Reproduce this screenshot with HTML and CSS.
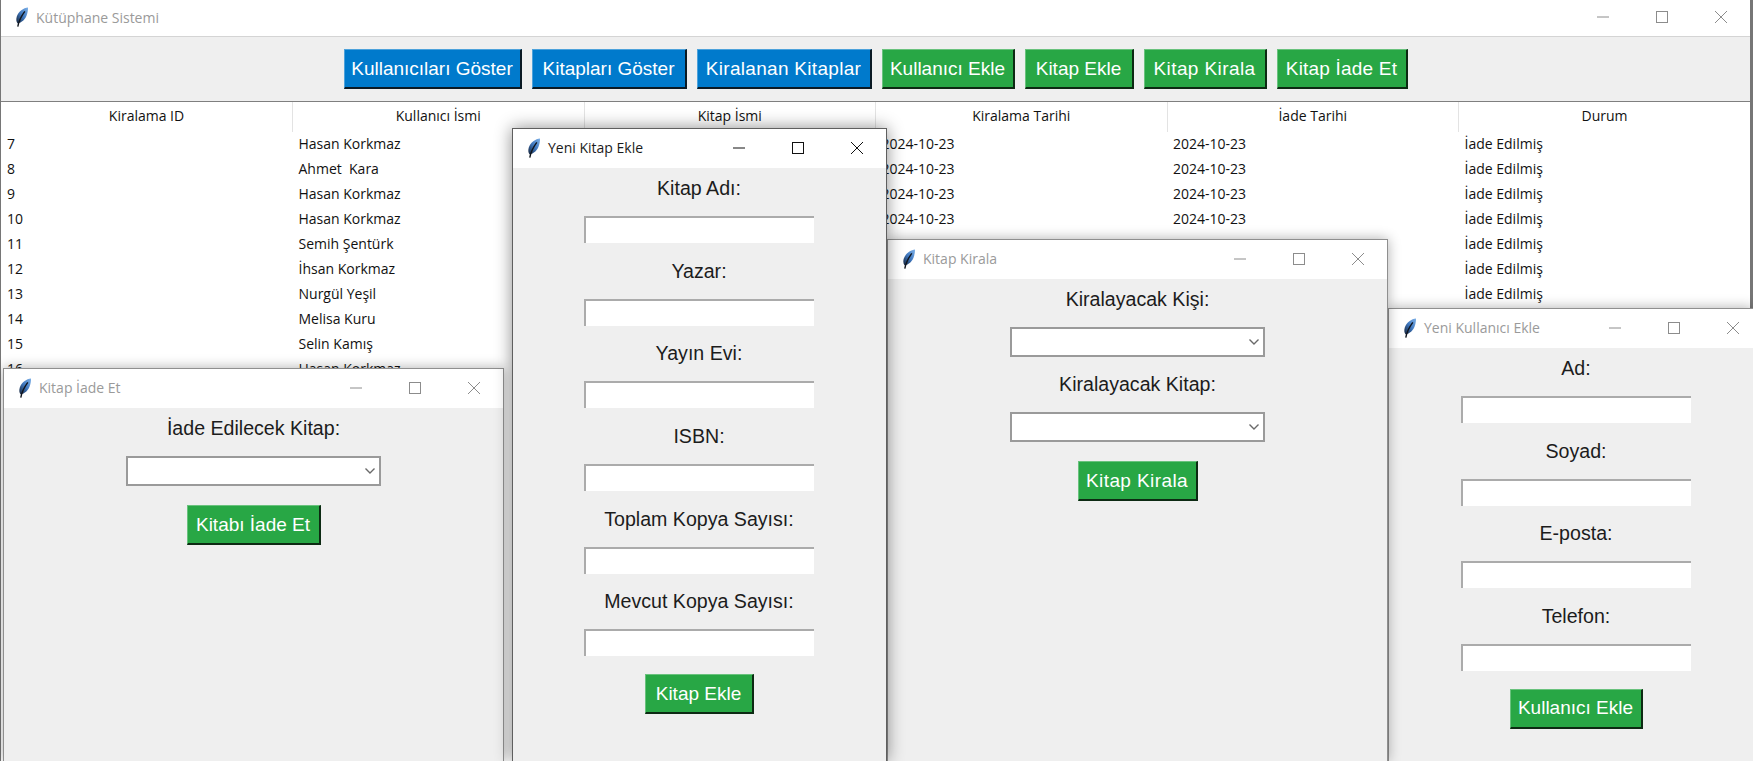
FILE: index.html
```html
<!DOCTYPE html>
<html lang="en">
<head>
    <meta charset="UTF-8">
    <meta name="viewport" content="width=device-width, initial-scale=1.0">
    <title>Kütüphane Sistemi</title>
    <link rel="stylesheet" href="styles.css">
</head>
<body>
    <svg class="sprite" width="0" height="0" xmlns="http://www.w3.org/2000/svg">
        <defs>
            <linearGradient id="featherFill" x1="100%" y1="0%" x2="0%" y2="100%">
                <stop offset="0%" stop-color="#7fb2e8"/>
                <stop offset="50%" stop-color="#3f78c0"/>
                <stop offset="100%" stop-color="#16243a"/>
            </linearGradient>
            <symbol id="feather" viewBox="0 0 14 20">
                <path d="M13,0.4 C8.6,0.8 3.4,4.4 1.8,9.6 C1,12.2 1.2,14.6 2.4,16.2 C6.8,15.6 10.2,12.4 11.6,8.4 C12.6,5.6 13.2,2.8 13,0.4 Z" fill="url(#featherFill)"/>
                <path d="M9.8,4.4 C6.8,8.4 4,13 2.8,19.6" fill="none" stroke="#10151d" stroke-width="1.4"/>
            </symbol>
            <symbol id="winMin" viewBox="0 0 12 12"><path d="M0,6 H12" fill="none" stroke="currentColor"/></symbol>
            <symbol id="winMax" viewBox="0 0 12 12"><rect x="0.5" y="0.5" width="11" height="11" fill="none" stroke="currentColor"/></symbol>
            <symbol id="winClose" viewBox="0 0 12 12"><path d="M0,0 L12,12 M12,0 L0,12" fill="none" stroke="currentColor"/></symbol>
        </defs>
    </svg>

    <div class="main-window">
        <div class="titlebar main-titlebar">
            <svg class="feather"><use href="#feather"/></svg>
            <span class="title">Kütüphane Sistemi</span>
            <div class="win-controls">
                <svg class="win-icon"><use href="#winMin"/></svg>
                <svg class="win-icon"><use href="#winMax"/></svg>
                <svg class="win-icon"><use href="#winClose"/></svg>
            </div>
        </div>
        <div class="toolbar">
            <button class="btn btn-blue btn-show-users">Kullanıcıları Göster</button>
            <button class="btn btn-blue btn-show-books">Kitapları Göster</button>
            <button class="btn btn-blue btn-show-rented">Kiralanan Kitaplar</button>
            <button class="btn btn-green btn-add-user">Kullanıcı Ekle</button>
            <button class="btn btn-green btn-add-book">Kitap Ekle</button>
            <button class="btn btn-green btn-rent">Kitap Kirala</button>
            <button class="btn btn-green btn-return">Kitap İade Et</button>
        </div>
        <table class="rentals">
            <thead>
                <tr>
                    <th>Kiralama ID</th>
                    <th>Kullanıcı İsmi</th>
                    <th>Kitap İsmi</th>
                    <th>Kiralama Tarihi</th>
                    <th>İade Tarihi</th>
                    <th>Durum</th>
                </tr>
            </thead>
            <tbody>
                <tr><td>7</td><td>Hasan Korkmaz</td><td></td><td>2024-10-23</td><td>2024-10-23</td><td>İade Edilmiş</td></tr>
                <tr><td>8</td><td>Ahmet&nbsp; Kara</td><td></td><td>2024-10-23</td><td>2024-10-23</td><td>İade Edilmiş</td></tr>
                <tr><td>9</td><td>Hasan Korkmaz</td><td></td><td>2024-10-23</td><td>2024-10-23</td><td>İade Edilmiş</td></tr>
                <tr><td>10</td><td>Hasan Korkmaz</td><td></td><td>2024-10-23</td><td>2024-10-23</td><td>İade Edilmiş</td></tr>
                <tr><td>11</td><td>Semih Şentürk</td><td></td><td>2024-10-23</td><td>2024-10-23</td><td>İade Edilmiş</td></tr>
                <tr><td>12</td><td>İhsan Korkmaz</td><td></td><td>2024-10-23</td><td>2024-10-23</td><td>İade Edilmiş</td></tr>
                <tr><td>13</td><td>Nurgül Yeşil</td><td></td><td>2024-10-23</td><td>2024-10-23</td><td>İade Edilmiş</td></tr>
                <tr><td>14</td><td>Melisa Kuru</td><td></td><td>2024-10-23</td><td>2024-10-23</td><td>İade Edilmiş</td></tr>
                <tr><td>15</td><td>Selin Kamış</td><td></td><td>2024-10-23</td><td>2024-10-23</td><td>İade Edilmiş</td></tr>
                <tr><td>16</td><td>Hasan Korkmaz</td><td></td><td>2024-10-23</td><td>2024-10-23</td><td>İade Edilmiş</td></tr>
            </tbody>
        </table>
    </div>

    <!-- dialogs, lowest first -->
    <div class="dialog dialog-user">
        <div class="titlebar">
            <svg class="feather"><use href="#feather"/></svg>
            <span class="title">Yeni Kullanıcı Ekle</span>
            <div class="win-controls">
                <svg class="win-icon"><use href="#winMin"/></svg>
                <svg class="win-icon"><use href="#winMax"/></svg>
                <svg class="win-icon"><use href="#winClose"/></svg>
            </div>
        </div>
        <div class="dialog-body">
            <label class="field-label">Ad:</label>
            <input class="entry" type="text">
            <label class="field-label">Soyad:</label>
            <input class="entry" type="text">
            <label class="field-label">E-posta:</label>
            <input class="entry" type="text">
            <label class="field-label">Telefon:</label>
            <input class="entry" type="text">
            <button class="btn btn-green btn-add-user dialog-btn">Kullanıcı Ekle</button>
        </div>
    </div>

    <div class="dialog dialog-rent">
        <div class="titlebar">
            <svg class="feather"><use href="#feather"/></svg>
            <span class="title">Kitap Kirala</span>
            <div class="win-controls">
                <svg class="win-icon"><use href="#winMin"/></svg>
                <svg class="win-icon"><use href="#winMax"/></svg>
                <svg class="win-icon"><use href="#winClose"/></svg>
            </div>
        </div>
        <div class="dialog-body">
            <label class="field-label">Kiralayacak Kişi:</label>
            <div class="combo"><svg class="combo-arrow" viewBox="0 0 10 6"><path d="M0.5,0.5 L5,5 L9.5,0.5" fill="none" stroke="currentColor" stroke-width="1.4"/></svg></div>
            <label class="field-label">Kiralayacak Kitap:</label>
            <div class="combo"><svg class="combo-arrow" viewBox="0 0 10 6"><path d="M0.5,0.5 L5,5 L9.5,0.5" fill="none" stroke="currentColor" stroke-width="1.4"/></svg></div>
            <button class="btn btn-green btn-rent-dialog dialog-btn">Kitap Kirala</button>
        </div>
    </div>

    <div class="dialog dialog-return">
        <div class="titlebar">
            <svg class="feather"><use href="#feather"/></svg>
            <span class="title">Kitap İade Et</span>
            <div class="win-controls">
                <svg class="win-icon"><use href="#winMin"/></svg>
                <svg class="win-icon"><use href="#winMax"/></svg>
                <svg class="win-icon"><use href="#winClose"/></svg>
            </div>
        </div>
        <div class="dialog-body">
            <label class="field-label">İade Edilecek Kitap:</label>
            <div class="combo"><svg class="combo-arrow" viewBox="0 0 10 6"><path d="M0.5,0.5 L5,5 L9.5,0.5" fill="none" stroke="currentColor" stroke-width="1.4"/></svg></div>
            <button class="btn btn-green btn-return-dialog dialog-btn">Kitabı İade Et</button>
        </div>
    </div>

    <div class="dialog dialog-book active">
        <div class="titlebar">
            <svg class="feather"><use href="#feather"/></svg>
            <span class="title">Yeni Kitap Ekle</span>
            <div class="win-controls">
                <svg class="win-icon"><use href="#winMin"/></svg>
                <svg class="win-icon"><use href="#winMax"/></svg>
                <svg class="win-icon"><use href="#winClose"/></svg>
            </div>
        </div>
        <div class="dialog-body">
            <label class="field-label">Kitap Adı:</label>
            <input class="entry" type="text">
            <label class="field-label">Yazar:</label>
            <input class="entry" type="text">
            <label class="field-label">Yayın Evi:</label>
            <input class="entry" type="text">
            <label class="field-label">ISBN:</label>
            <input class="entry" type="text">
            <label class="field-label">Toplam Kopya Sayısı:</label>
            <input class="entry" type="text">
            <label class="field-label">Mevcut Kopya Sayısı:</label>
            <input class="entry" type="text">
            <button class="btn btn-green btn-add-book dialog-btn">Kitap Ekle</button>
        </div>
    </div>
</body>
</html>
```

FILE: styles.css
```css
html, body {
    margin: 0;
    padding: 0;
    width: 100%;
    height: 100%;
    overflow: hidden;
    background-color: #767676;
    font-family: "Liberation Sans", Arial, sans-serif;
}
.sprite {
    position: absolute;
}
.main-window {
    margin-left: 1px;
    width: 1749px;
    height: 761px;
    background-color: #ffffff;
    display: flex;
    flex-direction: column;
}
.titlebar {
    flex: none;
    height: 39px;
    background-color: #ffffff;
    display: flex;
    align-items: center;
    padding-left: 14px;
    padding-bottom: 2px;
    box-sizing: border-box;
    font-family: "Open Sans", "Noto Sans", sans-serif;
}
.main-titlebar {
    height: 37px;
    border-bottom: 1px solid #d4d4d4;
}
.feather {
    width: 14px;
    height: 20px;
    flex: none;
}
.title {
    margin-left: 7px;
    font-size: 14px;
    color: #9a9a9a;
}
.win-controls {
    margin-left: auto;
    display: flex;
    align-items: center;
    gap: 47px;
    padding-right: 23px;
    color: #8c8c8c;
}
.win-icon {
    width: 12px;
    height: 12px;
}
.active .title {
    color: #1b1b1b;
}
.active .win-controls {
    color: #111111;
}
.toolbar {
    flex: none;
    height: 64px;
    background-color: #efefef;
    border-bottom: 1px solid #7f7f7f;
    display: flex;
    justify-content: center;
    align-items: center;
    gap: 10px;
}
.btn {
    height: 40px;
    padding: 0;
    font-family: "Liberation Sans", Arial, sans-serif;
    font-size: 19px;
    color: #ffffff;
    border-width: 1px 2px 2px 1px;
    border-style: solid;
    border-radius: 0;
}
.btn-blue {
    background-color: #007acc;
    border-color: #4da2db #0b1a24 #0b1a24 #4da2db;
}
.btn-green {
    background-color: #28a745;
    border-color: #69c27d #0d2a13 #0d2a13 #69c27d;
}
.btn-show-users { width: 178px; }
.btn-show-books { width: 155px; }
.btn-show-rented { width: 175px; letter-spacing: 0.3px; }
.btn-add-user { width: 133px; }
.btn-add-book { width: 109px; }
.btn-rent { width: 123px; letter-spacing: 0.4px; }
.btn-return { width: 131px; letter-spacing: 0.2px; }
.btn-rent-dialog { width: 120px; letter-spacing: 0.4px; }
.btn-return-dialog { width: 134px; }
.rentals {
    width: 1749px;
    table-layout: fixed;
    border-collapse: collapse;
    font-family: "Open Sans", "Noto Sans", sans-serif;
    font-size: 14px;
    line-height: 20px;
    color: #111111;
}
.rentals th {
    height: 28px;
    padding: 0 0 2px;
    font-weight: 400;
    text-align: center;
    border-right: 1px solid #e3e3e3;
}
.rentals th:last-child {
    border-right: none;
}
.rentals td {
    height: 23px;
    padding: 0 0 2px 6px;
    white-space: nowrap;
}

/* floating windows */
.dialog {
    position: absolute;
    bottom: 0;
    display: flex;
    flex-direction: column;
    box-sizing: border-box;
    background-color: #efefef;
    border: 1px solid #8f8f8f;
    border-bottom: none;
    box-shadow: 0 0 12px rgba(0, 0, 0, 0.32);
}
.dialog.active {
    border-color: #5f5f5f;
    box-shadow: 0 0 16px rgba(0, 0, 0, 0.45);
}
.dialog-book {
    left: 512px;
    top: 128px;
    width: 375px;
}
.dialog-book .dialog-body {
    padding-right: 1px;
}
.dialog-rent {
    left: 887px;
    top: 239px;
    width: 501px;
}
/* runs off the right side of the screen */
.dialog-user {
    left: 1388px;
    top: 308px;
    right: 0;
    border-right: none;
}
.dialog-user .win-controls {
    padding-right: 14px;
}
.dialog-user .dialog-body {
    padding-left: 10px;
}
.dialog-return {
    left: 3px;
    top: 368px;
    width: 501px;
}
.dialog-body {
    flex: 1;
    display: flex;
    flex-direction: column;
    align-items: center;
}
.field-label {
    height: 40px;
    line-height: 40px;
    font-size: 19.6px;
    color: #1c1c1c;
}
.entry {
    box-sizing: border-box;
    width: 230px;
    height: 27px;
    margin: 8px 0 7.7px;
    padding: 0;
    background-color: #ffffff;
    border-width: 2px 0 0 2px;
    border-style: solid;
    border-color: #ababab;
    border-radius: 0;
    outline: none;
}
.combo {
    box-sizing: border-box;
    position: relative;
    width: 255px;
    height: 30px;
    margin: 8px 0 7px;
    background-color: #ffffff;
    border: 2px solid #9a9a9a;
}
.combo-arrow {
    position: absolute;
    right: 4px;
    top: 10px;
    width: 10px;
    height: 6px;
    color: #6a6a6a;
}
.dialog-btn {
    margin-top: 10px;
}
.combo + .dialog-btn {
    margin-top: 12px;
}
```
